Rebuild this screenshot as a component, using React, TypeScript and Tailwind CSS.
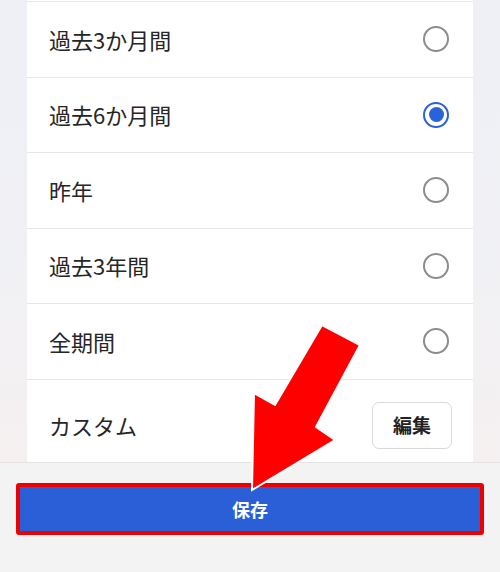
const options = [
  { label: "過去3か月間", selected: false },
  { label: "過去6か月間", selected: true },
  { label: "昨年", selected: false },
  { label: "過去3年間", selected: false },
  { label: "全期間", selected: false },
];

const Radio = ({ selected }: { selected: boolean }) =>
  selected ? (
    <span className="w-[26px] h-[26px] rounded-full border-[2.5px] border-[#2a62d9] flex items-center justify-center">
      <span className="w-[15px] h-[15px] rounded-full bg-[#2a62d9]" />
    </span>
  ) : (
    <span className="w-[26px] h-[26px] rounded-full border-[2.5px] border-[#8c8c8e]" />
  );

const App = () => {
  return (
    <div
      className="relative w-[500px] h-[572px] overflow-hidden flex flex-col bg-gradient-to-b from-[#eef0f6] via-[#f1f1f4] to-[#f8efee]"
      style={{ fontFamily: '"Noto Sans CJK JP", "Noto Sans", sans-serif' }}
    >
      {/* scrolling list */}
      <div className="flex-1 overflow-hidden px-[27px]">
        <div className="bg-white h-full">
          <div className="h-[2px] border-b border-[#e6e6e8]" />
          {options.map((o) => (
            <div
              key={o.label}
              className="h-[75.5px] flex items-center justify-between pl-[22px] pr-[24px] border-b border-[#e6e6e8]"
            >
              <span className="text-[22px] text-[#262626]">{o.label}</span>
              <Radio selected={o.selected} />
            </div>
          ))}
          <div className="h-[90px] flex items-center justify-between pl-[22px] pr-[21px] pt-[2px]">
            <span className="text-[22px] text-[#262626]">カスタム</span>
            <button className="w-[80px] h-[47px] rounded-[7px] border border-[#d9d9dc] bg-white text-[19px] font-bold text-[#222]">
              編集
            </button>
          </div>
        </div>
      </div>

      {/* footer */}
      <div className="h-[110px] border-t border-[#e4e4e6] bg-[#f3f3f3] pt-[20px] px-[16px]">
        <button className="w-full h-[52px] rounded-[3px] border-[4px] border-[#ef0000] bg-[#2b5fd8] text-white text-[18px] font-bold">
          保存
        </button>
      </div>

      {/* annotation arrow */}
      <svg className="absolute inset-0 pointer-events-none" width="500" height="572" viewBox="0 0 500 572">
        <polygon
          points="322,325 360,345 316,427 335,440 252,490 254,393 275,405"
          fill="#ff0000"
          stroke="#ffffff"
          strokeWidth="2"
          strokeLinejoin="miter"
        />
      </svg>
    </div>
  );
};

export default App;
